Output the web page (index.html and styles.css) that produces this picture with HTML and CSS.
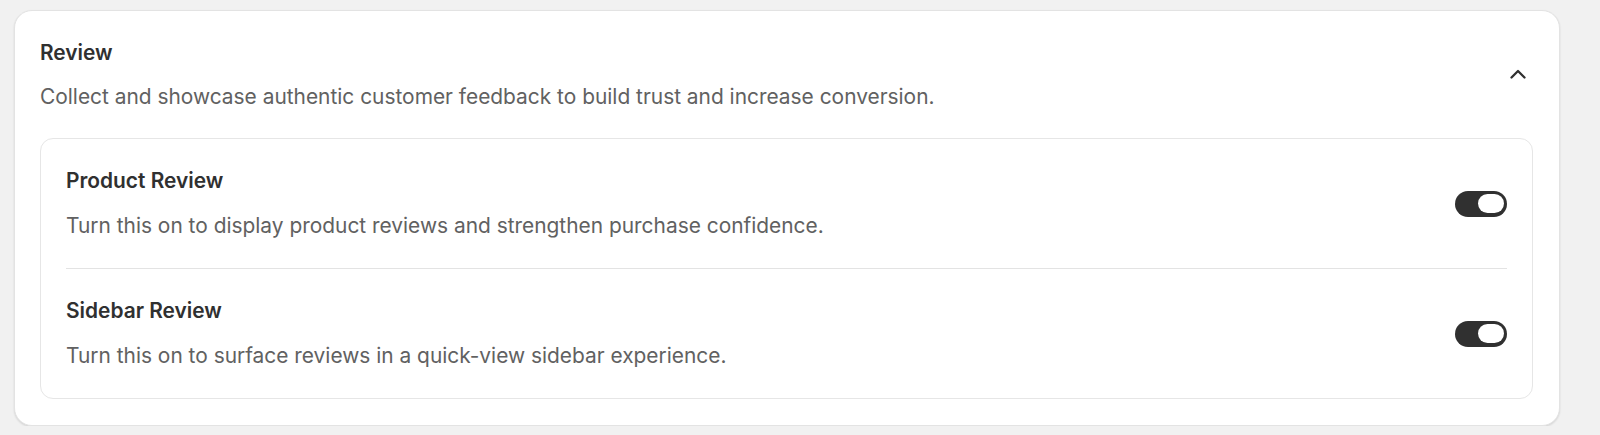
FILE: index.html
```html
<!DOCTYPE html>
<html lang="en">
<head>
<meta charset="utf-8">
<title>Review</title>
<link rel="stylesheet" href="styles.css">
</head>
<body>
<div class="page">
  <section class="card">
    <header class="card-header">
      <div class="header-text">
        <h2 class="card-title">Review</h2>
        <p class="card-desc">Collect and showcase authentic customer feedback to build trust and increase conversion.</p>
      </div>
      <button class="collapse-btn" aria-label="Collapse">
        <svg width="16" height="10" viewBox="0 0 16 10" aria-hidden="true">
          <path d="M1.5 8.5 L8 2 L14.5 8.5" fill="none" stroke="#303030" stroke-width="2.3" stroke-linecap="round" stroke-linejoin="round"/>
        </svg>
      </button>
    </header>
    <div class="settings">
      <div class="setting-row">
        <div class="setting-text">
          <h3 class="setting-title">Product Review</h3>
          <p class="setting-desc">Turn this on to display product reviews and strengthen purchase confidence.</p>
        </div>
        <span class="toggle" role="switch" aria-checked="true"><span class="knob"></span></span>
      </div>
      <div class="setting-row">
        <div class="setting-text">
          <h3 class="setting-title">Sidebar Review</h3>
          <p class="setting-desc">Turn this on to surface reviews in a quick-view sidebar experience.</p>
        </div>
        <span class="toggle" role="switch" aria-checked="true"><span class="knob"></span></span>
      </div>
    </div>
  </section>
</div>
</body>
</html>
```

FILE: styles.css
```css
* { box-sizing: border-box; }
html, body { margin: 0; padding: 0; }
body {
  background: #f1f1f1;
  font-family: Inter, "Noto Sans", "Liberation Sans", sans-serif;
  color: #303030;
}
.page {
  padding: 10px 40px 0 14px;
}
.card {
  background: #ffffff;
  border: 1px solid #e3e3e3;
  border-radius: 18px;
  box-shadow: 0 1px 2px rgba(0,0,0,0.12);
  padding: 28px 26px 26px 25px;
}
.card-header {
  display: flex;
  align-items: center;
  justify-content: space-between;
}
.card-title {
  margin: 0;
  font-size: 20.9px;
  line-height: 28px;
  font-weight: 600;
  color: #303030;
}
.card-desc {
  margin: 16px 0 0;
  font-size: 20.9px;
  line-height: 28px;
  font-weight: 400;
  color: #616161;
}
.collapse-btn {
  width: 30px;
  height: 30px;
  border: 0;
  background: transparent;
  padding: 0;
  display: flex;
  align-items: center;
  justify-content: center;
  margin-top: -2px;
}
.settings {
  margin-top: 27px;
  border: 1px solid #e6e6e6;
  border-radius: 13px;
  padding: 0 25px;
}
.setting-row {
  display: flex;
  align-items: center;
  justify-content: space-between;
  padding: 28px 0;
}
.setting-row + .setting-row {
  border-top: 1px solid #e3e3e3;
}
.setting-title {
  margin: 0;
  font-size: 20.9px;
  line-height: 28px;
  font-weight: 600;
  color: #303030;
}
.setting-desc {
  margin: 17px 0 0;
  font-size: 20.9px;
  line-height: 28px;
  font-weight: 400;
  color: #616161;
}
.toggle {
  width: 52px;
  height: 26px;
  border-radius: 13px;
  background: #303030;
  display: flex;
  align-items: center;
  justify-content: flex-end;
  padding-right: 3px;
  flex-shrink: 0;
}
.knob {
  width: 26px;
  height: 19px;
  border-radius: 10px;
  background: #ffffff;
}
```
